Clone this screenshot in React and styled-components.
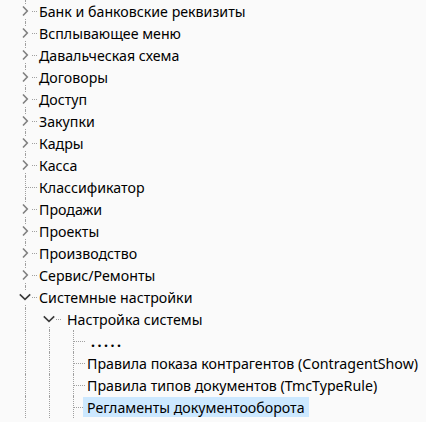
import React from 'react';
import styled, { createGlobalStyle, css } from 'styled-components';

const GlobalStyle = createGlobalStyle`
    html, body { margin: 0; padding: 0; background: #fafafa; }
    body { overflow: hidden; }
`;

const LINE = '#a0a0a0';

const StyledTree = styled.ul`
    list-style: none; margin: 0; padding: 0;
    width: 426px; height: 422px; overflow: hidden;
    background: #fafafa;
    font-family: "Segoe UI", "Noto Sans", "Open Sans", sans-serif;
    font-size: 14.2px; color: #000;
`;

const Row = styled.li`
    display: flex; align-items: stretch;
    height: 22px; padding-left: 13px;
`;

const Guide = styled.span`
    position: relative; flex: 0 0 24px;
    &::before{
        content: ''; position: absolute; left: 12px; top: 0; bottom: 0;
        border-left: 1px dotted ${LINE};
    }
`;

const NodeCell = styled.span`
    position: relative; flex: 0 0 24px;
    display: flex; align-items: center; justify-content: center;
    &::before{
        content: ''; position: absolute; left: 12px; bottom: 0;
        top: ${({fromCenter}) => fromCenter ? '11px' : '0'};
        border-left: 1px dotted ${LINE};
    }
    &::after{
        content: ''; position: absolute; left: 13px; right: 0; top: 11px;
        border-top: 1px dotted ${LINE};
    }
`;

const Toggle = styled.span`
    position: relative; z-index: 1;
    width: 13px; height: 13px; margin-left: -1px;
    background: #fafafa;
    display: flex; align-items: center; justify-content: center;
    svg{ display: block; }
`;

const Label = styled.span`
    position: relative; z-index: 1;
    align-self: center;
    height: 20px; line-height: 21px;
    padding: 0 4px;
    margin-left: ${({shift}) => shift}px;
    white-space: nowrap;
    ${({selected}) => selected && css`background: #cce8ff;`}
    ${({dots}) => dots && css`
        font-weight: 700; letter-spacing: 2.5px; padding-left: 8px;
    `}
`;

const ChevronRight = () => (
    <svg width="8" height="12" viewBox="0 0 8 12">
        <path d="M2 1.5 L6.3 6 L2 10.5" stroke="#808080" strokeWidth="1.6" fill="none" />
    </svg>
);

const ChevronDown = () => (
    <svg width="12" height="8" viewBox="0 0 12 8">
        <path d="M0.8 1.3 L6 6.3 L11.2 1.3" stroke="#3a3a3a" strokeWidth="1.6" fill="none" />
    </svg>
);

const items = [
    {depth: 0, label: 'Банк и банковские реквизиты', toggle: 'closed'},
    {depth: 0, label: 'Всплывающее меню', toggle: 'closed'},
    {depth: 0, label: 'Давальческая схема', toggle: 'closed'},
    {depth: 0, label: 'Договоры', toggle: 'closed'},
    {depth: 0, label: 'Доступ', toggle: 'closed'},
    {depth: 0, label: 'Закупки', toggle: 'closed'},
    {depth: 0, label: 'Кадры', toggle: 'closed'},
    {depth: 0, label: 'Касса', toggle: 'closed'},
    {depth: 0, label: 'Классификатор'},
    {depth: 0, label: 'Продажи', toggle: 'closed'},
    {depth: 0, label: 'Проекты', toggle: 'closed'},
    {depth: 0, label: 'Производство', toggle: 'closed'},
    {depth: 0, label: 'Сервис/Ремонты', toggle: 'closed'},
    {depth: 0, label: 'Системные настройки', toggle: 'open'},
    {depth: 1, label: 'Настройка системы', toggle: 'open', fromCenter: true, shift: 2},
    {depth: 2, label: '.....', dots: true},
    {depth: 2, label: 'Правила показа контрагентов (ContragentShow)'},
    {depth: 2, label: 'Правила типов документов (TmcTypeRule)'},
    {depth: 2, label: 'Регламенты документооборота', selected: true},
];

const App = () => {
    return (
        <>
            <GlobalStyle />
            <StyledTree>
                {items.map((item, i) => (
                    <Row key={i}>
                        {Array.from({length: item.depth}).map((_, g) => <Guide key={g} />)}
                        <NodeCell fromCenter={item.fromCenter}>
                            {item.toggle && (
                                <Toggle>
                                    {item.toggle === 'open' ? <ChevronDown /> : <ChevronRight />}
                                </Toggle>
                            )}
                        </NodeCell>
                        <Label shift={item.shift ?? -2} selected={item.selected} dots={item.dots}>
                            {item.label}
                        </Label>
                    </Row>
                ))}
            </StyledTree>
        </>
    )
}

export default App;
